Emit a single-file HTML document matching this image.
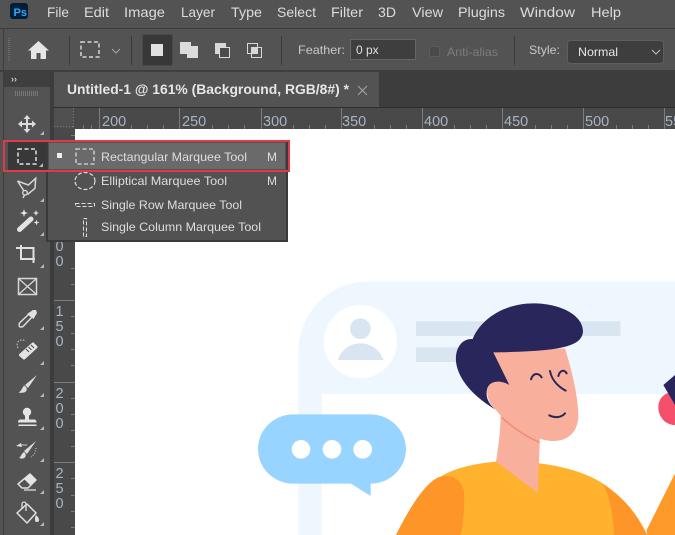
<!DOCTYPE html>
<html><head><meta charset="utf-8"><style>
html,body{margin:0;padding:0;background:#535353;width:675px;height:535px;overflow:hidden}
svg{display:block;font-family:"Liberation Sans",sans-serif}
</style></head><body>
<svg width="675" height="535" viewBox="0 0 675 535" xmlns="http://www.w3.org/2000/svg">
<rect width="675" height="535" fill="#535353"/>
<!-- menu -->
<rect x="10" y="3" width="18" height="16" rx="3" fill="#001e36"/>
<text x="13.500" y="16" font-size="11" font-weight="bold" fill="#31a8ff">Ps</text>
<g font-size="14" fill="#dcdcdc">
<text x="47" y="17" textLength="22" lengthAdjust="spacingAndGlyphs">File</text>
<text x="84" y="17" textLength="25" lengthAdjust="spacingAndGlyphs">Edit</text>
<text x="124" y="17" textLength="41" lengthAdjust="spacingAndGlyphs">Image</text>
<text x="181" y="17" textLength="34" lengthAdjust="spacingAndGlyphs">Layer</text>
<text x="231" y="17" textLength="31" lengthAdjust="spacingAndGlyphs">Type</text>
<text x="277" y="17" textLength="39" lengthAdjust="spacingAndGlyphs">Select</text>
<text x="331" y="17" textLength="32" lengthAdjust="spacingAndGlyphs">Filter</text>
<text x="378" y="17" textLength="18" lengthAdjust="spacingAndGlyphs">3D</text>
<text x="412" y="17" textLength="31" lengthAdjust="spacingAndGlyphs">View</text>
<text x="458" y="17" textLength="47" lengthAdjust="spacingAndGlyphs">Plugins</text>
<text x="520" y="17" textLength="55" lengthAdjust="spacingAndGlyphs">Window</text>
<text x="591" y="17" textLength="30" lengthAdjust="spacingAndGlyphs">Help</text>
</g>
<!-- option bar -->
<rect y="28" width="675" height="1" fill="#3c3c3c"/>
<rect y="70" width="675" height="2" fill="#3f3f3f"/>
<rect x="3" y="28" width="1" height="507" fill="#3e3e3e"/>
<path d="M9 38v24" stroke="#6a6a6a" stroke-width="2" stroke-dasharray="1 1"/>
<path d="M28 50.500 38.500 41 49 50.500h-3V59h-5.500v-6h-4v6H31v-8.500z" fill="#e6e6e6"/>
<g fill="#3a3a3a"><rect x="69" y="36" width="1" height="29"/><rect x="131" y="36" width="1" height="29"/><rect x="281" y="36" width="1" height="29"/><rect x="514" y="36" width="1" height="29"/></g>
<rect x="81" y="42" width="18" height="15" fill="none" stroke="#d6d6d6" stroke-width="1.500" stroke-dasharray="4 2.500"/>
<path d="M112 49l4 4 4-4" fill="none" stroke="#a8a8a8"/>
<rect x="142.500" y="34.500" width="30" height="31" rx="1" fill="#383838" stroke="#4a4a4a"/>
<rect x="151" y="44" width="12" height="12" fill="#e0e0e0"/>
<path d="M180 42h11v4h7v12h-11v-4h-7z" fill="#dcdcdc"/>
<rect x="215" y="43" width="11" height="11" fill="#d8d8d8"/>
<rect x="219.500" y="47.500" width="10" height="10" fill="#4b4b4b" stroke="#dcdcdc"/>
<rect x="247.500" y="43.500" width="10" height="10" fill="none" stroke="#d8d8d8"/>
<rect x="251.500" y="47.500" width="10" height="10" fill="none" stroke="#d8d8d8"/>
<rect x="252" y="48" width="5" height="5" fill="#d8d8d8"/>
<g font-size="12" fill="#c8c8c8">
<text x="298" y="54" textLength="47" lengthAdjust="spacingAndGlyphs">Feather:</text>
<text x="447" y="56" fill="#7c7c7c" textLength="51" lengthAdjust="spacingAndGlyphs">Anti-alias</text>
<text x="529" y="54" textLength="31" lengthAdjust="spacingAndGlyphs">Style:</text>
</g>
<rect x="350.500" y="39.500" width="65" height="20" fill="#3e3e3e" stroke="#666"/>
<text x="356" y="54" font-size="12" fill="#e0e0e0">0 px</text>
<rect x="429.500" y="46.500" width="10" height="10" rx="1.500" fill="#4a4a4a" stroke="#5c5c5c"/>
<rect x="567.500" y="40.500" width="96" height="23" rx="3" fill="#3e3e3e" stroke="#5e5e5e"/>
<text x="578" y="56" font-size="12" fill="#e6e6e6" textLength="40" lengthAdjust="spacingAndGlyphs">Normal</text>
<path d="M652 50l4 4 4-4" fill="none" stroke="#c0c0c0"/>
<!-- doc area -->
<rect x="50" y="72" width="625" height="463" fill="#3d3d3d"/>
<rect x="54" y="72" width="325" height="35" fill="#535353"/>
<text x="67" y="94" font-size="13.500" font-weight="bold" fill="#e6e6e6" textLength="282" lengthAdjust="spacingAndGlyphs">Untitled-1 @ 161% (Background, RGB/8#) *</text>
<path d="M358 86l9 9M367 86l-9 9" stroke="#a8a8a8" fill="none"/>
<rect x="54" y="107" width="621" height="1" fill="#2e2e2e"/>
<!-- rulers -->
<rect x="54" y="108" width="621" height="21" fill="#494949"/>
<rect x="54" y="108" width="21" height="427" fill="#494949"/>
<rect x="54" y="108" width="20" height="20" fill="#505050"/>
<path d="M54 126.500h19M73.500 108v19" stroke="#7a7a7a" stroke-dasharray="1 2" fill="none"/>
<g stroke="#7c7c7c" stroke-width="1">
<path d="M99.500 108v21M179.500 108v21M261.500 108v21M341.500 108v21M422.500 108v21M502.500 108v21M583.500 108v21M664.500 108v21"/>
<path d="M83.500 125v4M91.500 125v4M131.500 125v4M147.500 125v4M163.500 125v4M212.500 125v4M228.500 125v4M244.500 125v4M293.500 125v4M309.500 125v4M325.500 125v4M374.500 125v4M390.500 125v4M406.500 125v4M454.500 125v4M470.500 125v4M486.500 125v4M535.500 125v4M551.500 125v4M567.500 125v4M616.500 125v4M632.500 125v4M648.500 125v4"/>
<path d="M54 300.500h21M54 382.500h21M54 462.500h21"/>
<path d="M71 135.500h4M71 268.500h4M71 284.500h4M71 316.500h4M71 333.500h4M71 349.500h4M71 365.500h4M71 398.500h4M71 414.500h4M71 430.500h4M71 446.500h4M71 478.500h4M71 495.500h4M71 511.500h4M71 527.500h4"/>
</g>
<g font-size="14.500" fill="#a9b4c2">
<text x="102" y="126">200</text><text x="182" y="126">250</text><text x="263" y="126">300</text><text x="342" y="126">350</text><text x="424" y="126">400</text><text x="504" y="126">450</text><text x="585" y="126">500</text><text x="665" y="126">55</text>
<text x="55.500" y="251">0</text><text x="55.500" y="266">0</text>
<text x="55.500" y="316">1</text><text x="55.500" y="331">5</text><text x="55.500" y="346">0</text>
<text x="55.500" y="398">2</text><text x="55.500" y="413">0</text><text x="55.500" y="428">0</text>
<text x="55.500" y="478">2</text><text x="55.500" y="493">5</text><text x="55.500" y="508">0</text>
</g>
<!-- canvas -->
<rect x="75" y="129" width="600" height="406" fill="#fff"/>
<g transform="translate(250 270) scale(.33333)">
<path d="M145 795V250C145 130 235 35 355 35H1275V372H215V795Z" fill="#eef6fe"/>
<circle cx="331" cy="215" r="110" fill="#fff"/>
<circle cx="331" cy="176" r="31" fill="#d9e5f0"/>
<path d="M263 270C275 238 300 220 331 220S388 238 401 270Z" fill="#d9e5f0"/>
<rect x="498" y="154" width="613" height="44" fill="#d9e5f0"/>
<rect x="498" y="232" width="135" height="44" fill="#d9e5f0"/>
<path d="M130 433H360C420 433 468 480 468 537S420 641 362 641V678L303 641H130C72 641 24 595 24 537S72 433 130 433Z" fill="#97d4ff"/>
<circle cx="153" cy="538" r="28" fill="#fff"/><circle cx="246" cy="538" r="28" fill="#fff"/><circle cx="338" cy="538" r="28" fill="#fff"/>
<path d="M438 795C480 710 530 650 575 618C620 592 680 580 738 575L868 580C950 590 1020 612 1070 648C1120 685 1160 730 1187 785L1190 795Z" fill="#feb22d"/>
<path d="M438 795C480 710 525 640 565 622C600 610 635 625 642 665C645 710 640 760 632 795Z" fill="#fd9529"/>
<path d="M1060 645C1120 680 1160 730 1190 795H1092C1090 740 1080 680 1060 645Z" fill="#fd9529"/>
<path d="M752 430C752 480 745 530 738 575L863 668L870 500Z" fill="#f8b09c"/>
<path d="M730 240L945 235C965 300 985 380 985 440C983 490 950 515 905 513C860 510 800 480 755 440L735 417C710 395 700 350 730 335Z" fill="#f8b09c"/>
<path d="M755 442C790 475 830 500 868 517" fill="none" stroke="#ef8f74" stroke-width="5"/>
<path d="M735 418C680 385 625 335 618 275C615 235 635 205 668 207C690 150 760 100 850 100C930 100 1000 135 999 185C995 225 950 245 730 247L778 345C755 330 720 330 712 355C705 380 715 400 735 418Z" fill="#29265c"/>
<path d="M843 328C850 305 868 310 875 322M925 318C930 300 942 298 950 310M900 303C905 330 925 350 947 362M898 436C915 445 935 442 945 430" fill="none" stroke="#29265c" stroke-width="6" stroke-linecap="round"/>
<path d="M1190 780L1275 610V795H1190Z" fill="#fe9a2a"/>
<path d="M1275 365C1245 365 1225 385 1225 412S1245 465 1275 465Z" fill="#f4506b"/>
<path d="M1240 345L1275 315V405Z" fill="#29265c"/>
</g>
<!-- tool panel -->
<rect x="4" y="72" width="46" height="463" fill="#535353"/>
<rect x="50" y="72" width="1" height="463" fill="#3c3c3c"/>
<rect x="4" y="72" width="46" height="15" fill="#3f3f3f"/>
<text x="11" y="82" font-size="9" fill="#cfcfcf" font-weight="bold">››</text>
<path d="M15 93.500h24" stroke="#777" stroke-width="5" stroke-dasharray="1 1"/>
<!-- selected -->
<rect x="8" y="142" width="40" height="28" fill="#383838"/>
<rect x="18" y="149" width="18" height="15" fill="none" stroke="#e0e0e0" stroke-width="1.500" stroke-dasharray="4 2.500"/>
<!-- tools -->
<path d="M27 115l3.500 4h-2.500v4h4v-2.500l4 3.500-4 3.500V125h-4v4h2.500L27 133l-3.500-4H26v-4h-4v2.500L18 124l4-3.500V123h4v-4h-2.500z" fill="#dcdcdc"/>
<g fill="#b8b8b8">
<path d="M44 135h-4l4-4z"/><path d="M43 167h-4l4-4z"/><path d="M44 202h-4l4-4z"/><path d="M44 236h-4l4-4z"/><path d="M44 268h-4l4-4z"/><path d="M44 330h-4l4-4z"/><path d="M44 365h-4l4-4z"/><path d="M44 397h-4l4-4z"/><path d="M44 430h-4l4-4z"/><path d="M44 462h-4l4-4z"/><path d="M44 494h-4l4-4z"/><path d="M44 526h-4l4-4z"/>
</g>
<!-- lasso -->
<path d="M17.500 181L28.300 185L35.700 178.300L35 188.300L27.500 194.500M17.500 181L24 191" fill="none" stroke="#d6d6d6" stroke-width="1.500"/>
<circle cx="25" cy="192.700" r="2.300" fill="none" stroke="#d6d6d6" stroke-width="1.400"/><path d="M24.500 195l-1.500 3" stroke="#d6d6d6" stroke-width="1.400"/>
<!-- wand -->
<path d="M19.500 229.500L31 219" stroke="#e4e4e4" stroke-width="5" stroke-linecap="round"/>
<path d="M24 209l1 3 3 1-3 1-1 3-1-3-3-1 3-1zM36 210l.8 2.200 2.200.8-2.200.8-.8 2.200-.8-2.200-2.200-.8 2.200-.8zM36.500 219.500l.7 2.300 2.300.7-2.300.7-.7 2.300-.7-2.300-2.300-.7 2.300-.7z" fill="#e4e4e4"/>
<!-- crop -->
<path d="M21 245v14h14M16 248h17.500v15" fill="none" stroke="#e0e0e0" stroke-width="2"/>
<!-- frame -->
<rect x="18.500" y="278.500" width="18" height="16" fill="none" stroke="#d6d6d6" stroke-width="1.500"/>
<path d="M19 279l17 15M36 279l-17 15" stroke="#d6d6d6" stroke-width="1.300"/>
<!-- eyedropper -->
<path d="M19.500 323L29 314L32 317L23 326.500Q18 328.500 19.500 323Z" fill="none" stroke="#dcdcdc" stroke-width="1.500"/>
<path d="M27 314L33 310L36 310L37 313L33.500 319Z" fill="#e0e0e0"/>
<!-- healing -->
<path d="M20.500 355L33 344L36 347L24 358Z" fill="#e4e4e4" stroke="#e4e4e4" stroke-width="3" stroke-linejoin="round"/>
<path d="M26 349l3 3M28.500 347l3 3M31 345l3 3" stroke="#555" stroke-width="1.200"/>
<path d="M18 348C15 342 20 338 26 341" fill="none" stroke="#cfcfcf" stroke-dasharray="1.500 1.500"/>
<!-- brush -->
<path d="M37 375L28 388L25 385Z" fill="#dedede"/>
<path d="M24 385.500C28 387.500 27.500 391.500 24 392.500C22 393 20 393 18.500 392.500C21.500 391 22 388 24 385.500Z" fill="#dedede"/>
<!-- stamp -->
<circle cx="27" cy="412" r="4.200" fill="#e4e4e4"/>
<path d="M25 415h4v4.500h5c1.500 0 2.500 1 2.500 3H18c0-2 1-3 2.500-3H25z" fill="#e4e4e4"/>
<rect x="18.500" y="424.500" width="18" height="1.500" fill="#e4e4e4"/>
<!-- history -->
<path d="M36 441L27 454L24 451Z" fill="#dedede"/>
<path d="M24 452C27 454 26 458 23 458.500C21 459 20 458 19 458C21 457 21 454 24 452Z" fill="#dedede"/>
<path d="M16 446l5-3 1 4z" fill="#dedede"/><path d="M21 445h6" stroke="#ccc"/>
<path d="M36 448c0 4-2 7-5 9" stroke="#ccc" stroke-dasharray="1 1.500" fill="none"/>
<!-- eraser -->
<path d="M18 484L30 474L36 480L28 488H22Z" fill="none" stroke="#e0e0e0" stroke-width="1.500" stroke-linejoin="round"/>
<path d="M24 479L30 474L36 480L30 485Z" fill="#e4e4e4"/>
<path d="M24 490h12" stroke="#e0e0e0" stroke-width="1.300"/>
<!-- bucket -->
<path d="M17 513L27 504L36 513L27 523Z" fill="none" stroke="#e0e0e0" stroke-width="1.500" stroke-linejoin="round"/>
<path d="M22 508v-4a2 2 0 0 1 4 0v7" fill="none" stroke="#e0e0e0" stroke-width="1.300"/>
<path d="M36 515c2 2 3 3 3 5a2 2 0 0 1-4 0c0-2 0-3 1-5z" fill="#e0e0e0"/>
<!-- flyout -->
<rect x="47" y="141" width="240" height="100" fill="#525252" stroke="#3a3a3a" stroke-width="2"/>
<rect x="49" y="143" width="236" height="26" fill="#6a6a6a"/>
<rect x="57" y="153" width="5" height="5" fill="#efefef"/>
<rect x="76" y="149" width="18" height="15" fill="none" stroke="#dcdcdc" stroke-width="1.300" stroke-dasharray="4 2.500"/>
<ellipse cx="85" cy="181" rx="10" ry="8.500" fill="none" stroke="#dcdcdc" stroke-width="1.200" stroke-dasharray="4 2"/>
<rect x="75.500" y="203.500" width="19" height="3" fill="none" stroke="#dcdcdc" stroke-dasharray="4 2"/>
<rect x="83.500" y="218.500" width="3" height="18" fill="none" stroke="#dcdcdc" stroke-dasharray="4 2"/>
<g font-size="12" fill="#dedede">
<text x="101" y="161" textLength="146" lengthAdjust="spacingAndGlyphs">Rectangular Marquee Tool</text>
<text x="267" y="161">M</text>
<text x="101" y="185" textLength="126" lengthAdjust="spacingAndGlyphs">Elliptical Marquee Tool</text>
<text x="267" y="185">M</text>
<text x="101" y="209" textLength="141" lengthAdjust="spacingAndGlyphs">Single Row Marquee Tool</text>
<text x="101" y="231" textLength="160" lengthAdjust="spacingAndGlyphs">Single Column Marquee Tool</text>
</g>
<rect x="4" y="141" width="285" height="30" fill="none" stroke="#e03a46" stroke-width="2"/>
</svg>
</body></html>
